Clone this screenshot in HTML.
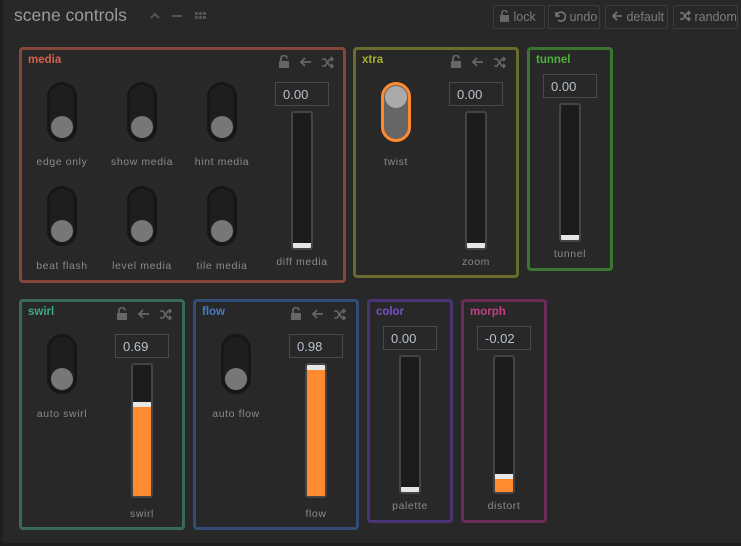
<!DOCTYPE html>
<html><head><style>
*{margin:0;padding:0;box-sizing:border-box}
body{width:741px;height:546px;background:#282828;font-family:"Liberation Sans",sans-serif;position:relative;overflow:hidden}
.a{position:absolute}
.p{position:absolute;border:3px solid;border-radius:4px}
.t{position:absolute;font-size:11.5px;font-weight:bold;left:6px;top:4px}
.lbl{position:absolute;font-size:10.5px;color:#8a8a8a;letter-spacing:.6px;text-align:center;width:100px;margin-left:-50px}
.tg{position:absolute;width:30px;height:60px;border:3px solid #161616;background:#1e1e1e;border-radius:15px}
.tg .k{position:absolute;left:1px;bottom:1px;width:22px;height:22px;border-radius:50%;background:#777}
.in{position:absolute;width:54px;height:24px;border:1px solid #4a4a4a;color:#b8c0cc;font-size:13px;padding:4px 0 0 7px}
.sl{position:absolute;width:22px;border:2px solid #444;background:#1c1c1c;border-radius:3px;overflow:hidden}
.sl .f{position:absolute;left:0;right:0;bottom:0;background:#ff8a30}
.sl .h{position:absolute;left:0;right:0;height:5px;background:#e6e6e6}
.ic{position:absolute;top:5px}
.btn{position:absolute;top:5px;height:24px;border:1px solid #3c3c3c;border-radius:2px;color:#7c7c7c;font-size:12.5px;padding:4px 0 0 5px;white-space:nowrap}
</style></head><body>
<div class="a" style="left:0;top:0;width:3px;height:546px;background:#1f1f1f"></div>
<div class="a" style="left:0;top:543px;width:741px;height:3px;background:#1f1f1f"></div>
<div class="a" style="left:14px;top:5px;font-size:17.5px;color:#9a9a9a">scene controls</div>
<svg class="a" style="left:148px;top:9px" width="62" height="14"><path d="M3 9l4-4 4 4" stroke="#555" stroke-width="2" fill="none"/><path d="M24 7h10" stroke="#555" stroke-width="2"/><g fill="#555"><rect x="47" y="3" width="3" height="3"/><rect x="51" y="3" width="3" height="3"/><rect x="55" y="3" width="3" height="3"/><rect x="47" y="7" width="3" height="3"/><rect x="51" y="7" width="3" height="3"/><rect x="55" y="7" width="3" height="3"/></g></svg>

<div class="btn" style="left:493px;width:52px"><svg width="11" height="12" style="vertical-align:-1px"><rect x="1" y="5" width="9" height="7" fill="#666"/><path d="M3 5V3a2.5 2.5 0 0 1 5 0" stroke="#666" stroke-width="1.6" fill="none"/></svg> lock</div>
<div class="btn" style="left:548px;width:52px"><svg width="12" height="12" style="vertical-align:-1px"><path d="M2 2v4h4M2.5 6A4.5 4.5 0 1 1 4 10" stroke="#777" stroke-width="1.6" fill="none"/></svg> undo</div>
<div class="btn" style="left:605px;width:63px"><svg width="12" height="12" style="vertical-align:-1px"><path d="M11 6H2M6 2L2 6l4 4" stroke="#777" stroke-width="1.6" fill="none"/></svg> default</div>
<div class="btn" style="left:673px;width:65px"><svg width="12" height="12" style="vertical-align:-1px"><path d="M1 3h3l4 6h3M1 9h3l4-6h3M9 1l2 2-2 2M9 7l2 2-2 2" stroke="#777" stroke-width="1.5" fill="none"/></svg> random</div>

<svg width="0" height="0" style="position:absolute"><defs><g id="ico"><rect x="1" y="6" width="10" height="7" fill="#666"/><path d="M3 6V3.5a3 3 0 0 1 6 0" stroke="#666" stroke-width="1.8" fill="none"/><path d="M33 7h-10M27 3l-4 4 4 4" stroke="#666" stroke-width="1.8" fill="none"/><path d="M44 4h3l5 7h3M44 11h3l5-7h3M53 2l2 2-2 2M53 9l2 2-2 2" stroke="#666" stroke-width="1.6" fill="none"/></g></defs></svg>

<div class="p" style="left:19px;top:47px;width:327px;height:236px;border-color:#84473a"><div class="t" style="color:#d2634a">media</div><svg class="ic" style="left:256px" width="58" height="14"><use href="#ico"/></svg></div>
<div class="tg" style="left:47px;top:82px"><div class="k"></div></div>
<div class="tg" style="left:127px;top:82px"><div class="k"></div></div>
<div class="tg" style="left:207px;top:82px"><div class="k"></div></div>
<div class="lbl" style="left:62px;top:156px">edge only</div>
<div class="lbl" style="left:142px;top:156px">show media</div>
<div class="lbl" style="left:222px;top:156px">hint media</div>
<div class="tg" style="left:47px;top:186px"><div class="k"></div></div>
<div class="tg" style="left:127px;top:186px"><div class="k"></div></div>
<div class="tg" style="left:207px;top:186px"><div class="k"></div></div>
<div class="lbl" style="left:62px;top:260px">beat flash</div>
<div class="lbl" style="left:142px;top:260px">level media</div>
<div class="lbl" style="left:222px;top:260px">tile media</div>
<div class="in" style="left:275px;top:82px">0.00</div>
<div class="sl" style="left:291px;top:111px;height:139px"><div class="h" style="bottom:0"></div></div>
<div class="lbl" style="left:302px;top:256px">diff media</div>

<div class="p" style="left:353px;top:47px;width:166px;height:231px;border-color:#6a6c2c"><div class="t" style="color:#a6b030">xtra</div><svg class="ic" style="left:94px" width="58" height="14"><use href="#ico"/></svg></div>
<div class="a" style="left:381px;top:82px;width:30px;height:60px;border:3px solid #ff8a30;border-radius:15px;background:#666;overflow:hidden"><div class="a" style="left:1px;top:1px;width:22px;height:22px;border-radius:50%;background:#aaa"></div></div>
<div class="lbl" style="left:396px;top:156px">twist</div>
<div class="in" style="left:449px;top:82px">0.00</div>
<div class="sl" style="left:465px;top:111px;height:139px"><div class="h" style="bottom:0"></div></div>
<div class="lbl" style="left:476px;top:256px">zoom</div>

<div class="p" style="left:527px;top:47px;width:86px;height:224px;border-color:#3a7630"><div class="t" style="color:#4cb03a">tunnel</div></div>
<div class="in" style="left:543px;top:74px">0.00</div>
<div class="sl" style="left:559px;top:103px;height:139px"><div class="h" style="bottom:0"></div></div>
<div class="lbl" style="left:570px;top:248px">tunnel</div>

<div class="p" style="left:19px;top:299px;width:166px;height:231px;border-color:#386a56"><div class="t" style="color:#3aaa80">swirl</div><svg class="ic" style="left:94px" width="58" height="14"><use href="#ico"/></svg></div>
<div class="tg" style="left:47px;top:334px"><div class="k"></div></div>
<div class="lbl" style="left:62px;top:408px">auto swirl</div>
<div class="in" style="left:115px;top:334px">0.69</div>
<div class="sl" style="left:131px;top:363px;height:135px"><div class="f" style="height:89px"></div><div class="h" style="bottom:89px"></div></div>
<div class="lbl" style="left:142px;top:508px">swirl</div>

<div class="p" style="left:193px;top:299px;width:166px;height:231px;border-color:#324e78"><div class="t" style="color:#4a78c4">flow</div><svg class="ic" style="left:94px" width="58" height="14"><use href="#ico"/></svg></div>
<div class="tg" style="left:221px;top:334px"><div class="k"></div></div>
<div class="lbl" style="left:236px;top:408px">auto flow</div>
<div class="in" style="left:289px;top:334px">0.98</div>
<div class="sl" style="left:305px;top:363px;height:135px"><div class="f" style="height:126px"></div><div class="h" style="bottom:126px"></div></div>
<div class="lbl" style="left:316px;top:508px">flow</div>

<div class="p" style="left:367px;top:299px;width:86px;height:224px;border-color:#4c3276"><div class="t" style="color:#7a50c8">color</div></div>
<div class="in" style="left:383px;top:326px">0.00</div>
<div class="sl" style="left:399px;top:355px;height:139px"><div class="h" style="bottom:0"></div></div>
<div class="lbl" style="left:410px;top:500px">palette</div>

<div class="p" style="left:461px;top:299px;width:86px;height:224px;border-color:#6c2c58"><div class="t" style="color:#c24080">morph</div></div>
<div class="in" style="left:477px;top:326px">-0.02</div>
<div class="sl" style="left:493px;top:355px;height:139px"><div class="f" style="height:13px"></div><div class="h" style="bottom:13px"></div></div>
<div class="lbl" style="left:504px;top:500px">distort</div>
</body></html>
